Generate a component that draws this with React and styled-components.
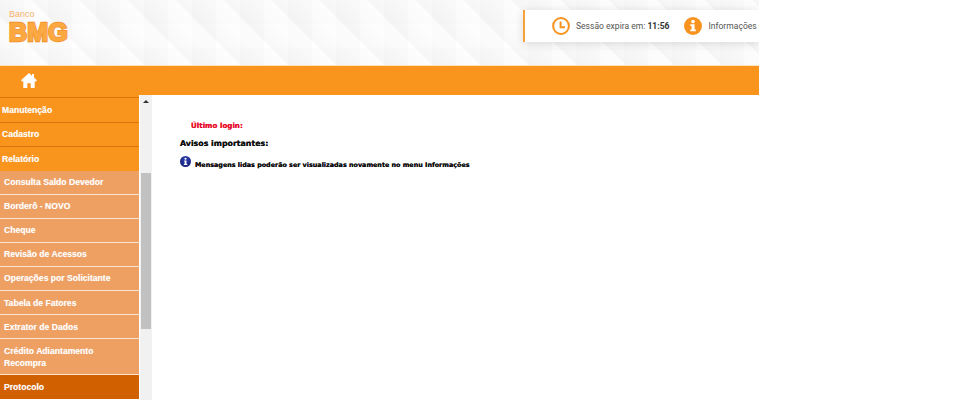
import React from "react";
import styled, { createGlobalStyle } from "styled-components";

const Global = createGlobalStyle`
  html, body { margin: 0; padding: 0; background: #fff; }
  body { width: 965px; height: 400px; overflow: hidden; font-family: "Liberation Sans", Arial, sans-serif; }
`;
const Page = styled.div`width: 759px; height: 400px; display: flex; flex-direction: column; overflow: hidden;`;
const Header = styled.header`
  height: 66px; flex: none; box-sizing: border-box; display: flex; justify-content: space-between; align-items: flex-start;
  border-bottom: 1px solid #fde3c0;
  background-color: #fff;
  background-image:
    linear-gradient(90deg, rgba(0,0,0,.012) 50%, rgba(0,0,0,0) 50%),
    linear-gradient(rgba(0,0,0,.008) 50%, rgba(0,0,0,0) 50%),
    repeating-linear-gradient(45deg, #f8f8f8 0, #fdfdfd 20px, #fff 34px);
  background-size: 48px 48px, 48px 48px, auto;
`;
const Logo = styled.div`display: flex; flex-direction: column; padding: 9px 0 0 9px; line-height: 1;`;
const Banco = styled.span`font-size: 9px; color: #f6b26c; line-height: 11px;`;
const Bmg = styled.span`
  font-weight: 700; font-size: 25px; line-height: 24px; letter-spacing: 0.2px;
  -webkit-text-fill-color: #fba83e;
  -webkit-text-stroke: 2.4px #f58e1e; paint-order: stroke fill;
  text-shadow: 0 0 1.5px #fbc58c;
`;
const SessionBox = styled.div`
  margin-top: 10px; height: 32px; width: 236px; flex: none; box-sizing: border-box; background: #fff; border-left: 2px solid #f7a33c;
  display: flex; align-items: center; padding-left: 27px; box-shadow: 0 2px 10px rgba(0,0,0,.14); color: #555; font-family: Roboto, sans-serif; font-size: 8.55px; white-space: nowrap;
  svg { flex: none; }
`;
const SessionText = styled.span`margin-left: 6px; color: #555; b { color: #333; font-weight: 700; }`;
const InfoWrap = styled.span`display: flex; align-items: center; margin-left: 15px;`;
const NavBar = styled.nav`height: 29px; flex: none; background: #f9941d; display: flex; align-items: center; padding-left: 21px;`;
const Body = styled.div`display: flex; flex: 1; min-height: 0;`;
const Side = styled.aside`width: 139px; flex: none; display: flex; flex-direction: column; border-top: 2px solid #f9941d; overflow: hidden;`;
const Top = styled.a`
  display: flex; align-items: center; height: 24.5px; flex: none; box-sizing: border-box; background: #f9941d; border-top: 1px solid #d9770f; color: #fff; font-weight: 700; font-size: 8.6px; padding-left: 2px; text-shadow: 0 0 1px rgba(255,255,255,.45);
`;
const Sub = styled.a`
  display: block; flex: none; box-sizing: border-box; padding: 5.55px 8px 5.55px 4px; background: ${p => p.$active ? "#d16000" : "#ee9f62"};
  border-bottom: 1px solid ${p => p.$active ? "#d16000" : "#fbe3d0"}; color: #fff; font-weight: 700; font-size: 8.6px; line-height: 12px; text-shadow: 0 0 1px rgba(255,255,255,.45);
`;
const Scroll = styled.div`width: 12px; margin-left: 1px; background: #f1f1f1; flex: none; display: flex; flex-direction: column; align-items: center;`;
const Arrow = styled.div`height: 12px; display: flex; align-items: center; justify-content: center; &::before { content: ""; border-left: 3px solid transparent; border-right: 3px solid transparent; border-bottom: 3px solid #333; }`;
const Thumb = styled.div`width: 10px; height: 156px; margin-top: 66px; background: #c1c1c1;`;
const Main = styled.main`flex: 1; padding: 25px 0 0 28px; font-family: "DejaVu Sans", Verdana, sans-serif; font-weight: 700; text-shadow: 0 0 .3px currentColor;`;
const Last = styled.div`color: #e8112d; font-size: 7.15px; margin-left: 11px; line-height: 11px;`;
const Avisos = styled.div`font-size: 7.85px; color: #111; margin-top: 7px; line-height: 12px;`;
const Msg = styled.div`display: flex; align-items: flex-start; gap: 4px; margin-top: 6px; font-size: 6.4px; color: #111;`;
const MsgText = styled.span`margin-top: 5px;`;

const Clock = () => <svg width="18" height="18" viewBox="0 0 18 18"><circle cx="9" cy="9" r="7.9" fill="none" stroke="#f7931e" strokeWidth="2"/><path d="M8.6 4.6V10.2H13" fill="none" stroke="#f7931e" strokeWidth="2"/></svg>;
const Info = () => <svg width="18" height="18" viewBox="0 0 18 18"><circle cx="9" cy="9" r="9" fill="#f7931e"/><circle cx="9" cy="4.6" r="1.8" fill="#fff"/><path d="M6.3 7.3H10.6V12.4H11.8V14.2H6.3V12.4H7.6V9.1H6.3Z" fill="#fff"/></svg>;
const Home = () => <svg width="16" height="15" viewBox="0 0 16 15"><path d="M8 0 11 2.7V1H13V4.5L16 7.3 15 8.4H13.7V15H9.7V10.2H6.3V15H2.3V8.4H1L0 7.3Z" fill="#fff"/></svg>;
const Blue = () => (
  <svg width="11" height="11" viewBox="0 0 11 11">
    <defs><radialGradient id="gloss" cx="50%" cy="30%" r="75%"><stop offset="0" stopColor="#2f3fae"/><stop offset="1" stopColor="#131f7a"/></radialGradient></defs>
    <circle cx="5.5" cy="5.5" r="5.5" fill="url(#gloss)"/><circle cx="5.5" cy="2.8" r="1.05" fill="#fff"/><path d="M4.2 4.5H6.5V8H7.3V9.1H3.8V8H4.6V5.5H4.2Z" fill="#fff"/>
  </svg>
);

const subs = ["Consulta Saldo Devedor", "Borderô - NOVO", "Cheque", "Revisão de Acessos", "Operações por Solicitante", "Tabela de Fatores", "Extrator de Dados", "Crédito Adiantamento Recompra"];

export default function App() {
  return (
    <Page>
      <Global />
      <Header>
        <Logo><Banco>Banco</Banco><Bmg>BMG</Bmg></Logo>
        <SessionBox>
          <Clock />
          <SessionText>Sessão expira em: <b>11:56</b></SessionText>
          <InfoWrap><Info /><SessionText>Informações</SessionText></InfoWrap>
        </SessionBox>
      </Header>
      <NavBar><Home /></NavBar>
      <Body>
        <Side>
          <Top>Manutenção</Top>
          <Top>Cadastro</Top>
          <Top>Relatório</Top>
          {subs.map(s => <Sub key={s}>{s}</Sub>)}
          <Sub $active>Protocolo</Sub>
        </Side>
        <Scroll><Arrow /><Thumb /></Scroll>
        <Main>
          <Last>Último login:</Last>
          <Avisos>Avisos importantes:</Avisos>
          <Msg><Blue /><MsgText>Mensagens lidas poderão ser visualizadas novamente no menu Informações</MsgText></Msg>
        </Main>
      </Body>
    </Page>
  );
}
